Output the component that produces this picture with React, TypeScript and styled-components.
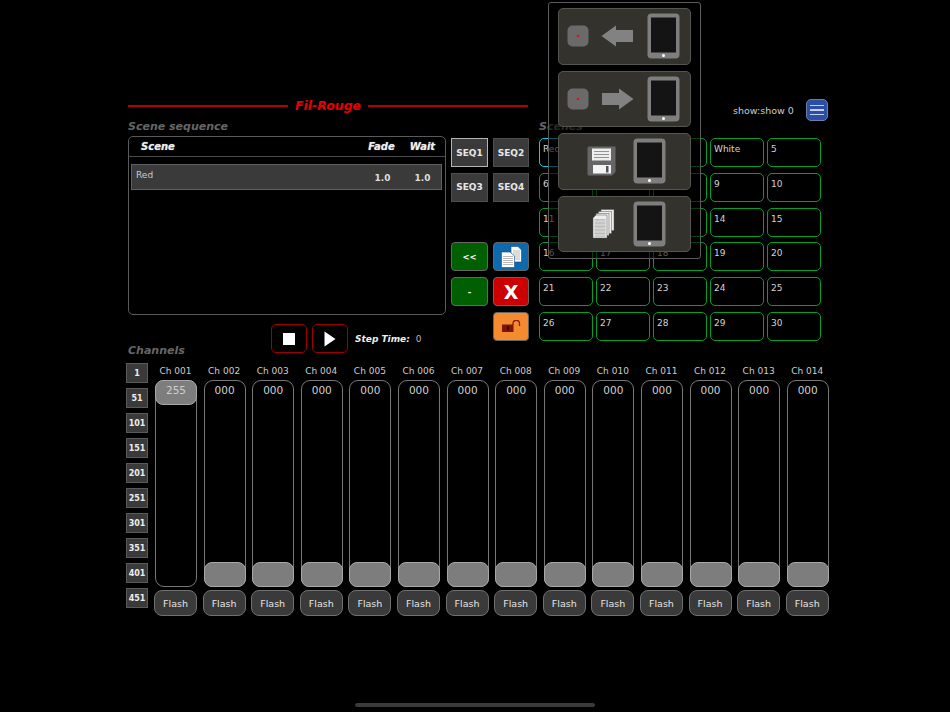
import styled, { createGlobalStyle } from 'styled-components'

const FONT = '"DejaVu Sans", Verdana, sans-serif'

const SCENES = [
  'Red', '2', '3', 'White', '5',
  '6', '7', '8', '9', '10',
  '11', '12', '13', '14', '15',
  '16', '17', '18', '19', '20',
  '21', '22', '23', '24', '25',
  '26', '27', '28', '29', '30',
]
const BANKS = [1, 51, 101, 151, 201, 251, 301, 351, 401, 451]
const CHANNELS = Array(14).fill(null).map((_, idx) => ({
  name: 'Ch ' + String(idx + 1).padStart(3, '0'),
  value: idx === 0 ? 255 : 0,
}))

const GlobalStyle = createGlobalStyle`
  html, body {
    margin: 0;
    background: #000;
  }
`

export default function App() {
  return (
    <Page>
      <GlobalStyle />
      <Header>
        <TitleBar>
          <TitleLine />
          <Title>Fil-Rouge</Title>
          <TitleLine />
        </TitleBar>
        <ShowName>show:show 0</ShowName>
        <MenuButton>
          <span />
          <span />
          <span />
        </MenuButton>
      </Header>

      <TopArea>
        <SequenceColumn>
          <SectionLabel>Scene sequence</SectionLabel>
          <SequencePanel>
            <SequenceHead>
              <HeadScene>Scene</HeadScene>
              <HeadFade>Fade</HeadFade>
              <HeadWait>Wait</HeadWait>
            </SequenceHead>
            <SequenceRow>
              <RowName>Red</RowName>
              <RowFade>1.0</RowFade>
              <RowWait>1.0</RowWait>
            </SequenceRow>
          </SequencePanel>
          <Transport>
            <TransportButton>
              <svg width="12" height="12" viewBox="0 0 12 12"><rect width="12" height="12" fill="#fff" /></svg>
            </TransportButton>
            <TransportButton>
              <svg width="12" height="16" viewBox="0 0 12 16"><path d="M0.5 0.5 L11.5 8 L0.5 15.5 Z" fill="#fff" /></svg>
            </TransportButton>
            <StepTime>Step Time:</StepTime>
            <StepValue>0</StepValue>
          </Transport>
        </SequenceColumn>

        <ActionGrid>
          <SeqButton $active>SEQ1</SeqButton>
          <SeqButton>SEQ2</SeqButton>
          <SeqButton>SEQ3</SeqButton>
          <SeqButton>SEQ4</SeqButton>
          <EmptyRow />
          <ActionButton $color="#005f00">&lt;&lt;</ActionButton>
          <ActionButton $color="#0f69ad"><CopyIcon /></ActionButton>
          <ActionButton $color="#005f00">-</ActionButton>
          <ActionButton $color="#cc0000" $big>X</ActionButton>
          <span />
          <ActionButton $color="#f58a2e"><LockIcon /></ActionButton>
        </ActionGrid>

        <SceneColumn>
          <SectionLabel>Scenes</SectionLabel>
          <SceneGrid>
            {SCENES.map((scene, idx) => (
              <SceneCell key={idx} $active={idx === 0}>{scene}</SceneCell>
            ))}
          </SceneGrid>
        </SceneColumn>
      </TopArea>

      <ChannelsLabel>Channels</ChannelsLabel>
      <ChannelArea>
        <BankColumn>
          {BANKS.map(bank => (
            <BankButton key={bank}>{bank}</BankButton>
          ))}
        </BankColumn>
        <ChannelGrid>
          {CHANNELS.map(ch => (
            <Channel key={ch.name}>
              <ChannelName>{ch.name}</ChannelName>
              <Track $top={ch.value === 255}>
                <Thumb />
                <ChannelValue>{String(ch.value).padStart(3, '0')}</ChannelValue>
              </Track>
              <FlashButton>Flash</FlashButton>
            </Channel>
          ))}
        </ChannelGrid>
      </ChannelArea>

      <Popup>
        <PopupCard>
          <DeviceIcon />
          <ArrowLeft />
          <TabletIcon />
        </PopupCard>
        <PopupCard>
          <DeviceIcon />
          <ArrowRight />
          <TabletIcon />
        </PopupCard>
        <PopupCard $centered>
          <FloppyIcon />
          <TabletIcon />
        </PopupCard>
        <PopupCard $centered>
          <PagesIcon />
          <TabletIcon />
        </PopupCard>
      </Popup>

      <HomeBar />
    </Page>
  )
}

function CopyIcon() {
  return (
    <svg width="21" height="22" viewBox="0 0 21 22">
      <path d="M10 0.500 H17 L20.500 4 V16 H10 Z" fill="#fff" stroke="#0b4f85" strokeWidth="0.600" />
      <path d="M12 5h7M12 7h7M12 9h7M12 11h7M12 13h7" stroke="#9a9a9a" strokeWidth="0.700" />
      <path d="M0.500 6 H9 L13.500 10 V21.500 H0.500 Z" fill="#fff" stroke="#0b4f85" strokeWidth="0.600" />
      <path d="M2 10.500h10M2 12.500h10M2 14.500h10M2 16.500h10M2 18.500h10" stroke="#9a9a9a" strokeWidth="0.700" />
    </svg>
  )
}

function LockIcon() {
  return (
    <svg width="19" height="12" viewBox="0 0 19 12">
      <path d="M11 5 V3.500 A3.200 3.200 0 0 1 17.500 3.500 V6" fill="none" stroke="#8b1a10" strokeWidth="1.300" />
      <rect x="0" y="4.500" width="11.500" height="7.500" fill="#7d1408" />
      <rect x="5" y="6.500" width="1.800" height="3.500" fill="#111" />
    </svg>
  )
}

function DeviceIcon() {
  return (
    <svg width="22" height="22" viewBox="0 0 22 22">
      <rect x="0.500" y="0.500" width="21" height="21" rx="5" fill="#6a6a6a" />
      <circle cx="11" cy="11" r="1.300" fill="#e0101a" />
    </svg>
  )
}

function ArrowLeft() {
  return (
    <svg width="33" height="22" viewBox="0 0 33 22">
      <path d="M0.500 11 L15 0.500 V5 H32 V17 H15 V21.500 Z" fill="#828282" />
    </svg>
  )
}

function ArrowRight() {
  return (
    <svg width="33" height="22" viewBox="0 0 33 22">
      <path d="M32.500 11 L18 0.500 V5 H1 V17 H18 V21.500 Z" fill="#828282" />
    </svg>
  )
}

function TabletIcon() {
  return (
    <svg width="33" height="46" viewBox="0 0 33 46">
      <rect x="0.500" y="0.500" width="32" height="45" rx="4" fill="#7e7e7e" />
      <rect x="4" y="4.500" width="25" height="35" fill="#141414" />
      <circle cx="16.500" cy="42.500" r="1.500" fill="#fff" />
    </svg>
  )
}

function FloppyIcon() {
  return (
    <svg width="29" height="30" viewBox="0 0 29 30">
      <path d="M2 0.500 H28.500 V26 L25 29.500 H2 A1.500 1.500 0 0 1 0.500 28 V2 A1.500 1.500 0 0 1 2 0.500 Z" fill="#666" />
      <rect x="5" y="2.500" width="19" height="12" fill="#eee" />
      <path d="M7 5.500h15M7 8.500h15M7 11.500h15" stroke="#888" strokeWidth="0.900" />
      <rect x="6" y="19" width="18" height="8.500" fill="#f4f4f4" />
      <rect x="19" y="20" width="2.500" height="6.500" fill="#555" />
    </svg>
  )
}

function PagesIcon() {
  const lines = [0, 1, 2, 3, 4, 5, 6, 7, 8, 9, 10, 11, 12]
  return (
    <svg width="29" height="30" viewBox="0 0 29 30">
      <rect x="14" y="0.500" width="13" height="21" fill="#eee" stroke="#555" strokeWidth="0.500" />
      <rect x="11.500" y="2.500" width="13" height="22" fill="#eee" stroke="#555" strokeWidth="0.500" />
      <rect x="9" y="4.500" width="13" height="22" fill="#eee" stroke="#555" strokeWidth="0.500" />
      <path d="M6 9 L9 6 H20 V29 H6 Z" fill="#eee" stroke="#555" strokeWidth="0.500" />
      {lines.map(i => (
        <path key={i} d={`M7.500 ${10.500 + i * 1.400}h11`} stroke="#999" strokeWidth="0.600" />
      ))}
    </svg>
  )
}

const Page = styled.div`
  position: relative;
  box-sizing: border-box;
  width: 950px;
  height: 712px;
  padding: 98px 0 0 126px;
  overflow: hidden;
  background: #000;
  font-family: ${FONT};
  color: #ccc;
`

const Header = styled.div`
  display: flex;
  height: 21px;
  padding-left: 2px;
`

const TitleBar = styled.div`
  display: flex;
  align-items: center;
  gap: 7px;
  width: 400px;
  height: 15px;
`

const TitleLine = styled.div`
  flex: 1;
  height: 2px;
  background: #b00000;
`

const Title = styled.div`
  font-size: 12.500px;
  font-weight: bold;
  font-style: italic;
  color: #e80000;
`

const ShowName = styled.div`
  margin: 6px 0 0 205px;
  width: 73px;
  font-size: 9.500px;
  line-height: 13px;
  color: #ccc;
`

const MenuButton = styled.div`
  box-sizing: border-box;
  display: flex;
  flex-direction: column;
  justify-content: center;
  gap: 3px;
  width: 22px;
  height: 22px;
  margin-top: 1px;
  padding: 0 3px;
  background: #2b4fa5;
  border: 1.500px solid #6d7fa8;
  border-radius: 5px;

  span {
    height: 1.500px;
    background: #c5d0ee;
  }
`

const TopArea = styled.div`
  display: flex;
  padding-left: 2px;
`

const SequenceColumn = styled.div`
  width: 318px;
`

const SectionLabel = styled.div`
  height: 17px;
  font-size: 11px;
  line-height: 16px;
  font-weight: bold;
  font-style: italic;
  color: #666;
`

const SequencePanel = styled.div`
  box-sizing: border-box;
  height: 179px;
  border: 1.500px solid #5a5a5a;
  border-radius: 5px;
`

const SequenceHead = styled.div`
  display: grid;
  grid-template-columns: 1fr 41px 41px;
  align-items: center;
  height: 19px;
  padding-right: 2px;
  border-bottom: 1px solid #4a4a4a;
  font-size: 10px;
  font-weight: bold;
  font-style: italic;
  color: #eee;
  text-shadow: 0 0 1px #999;
`

const HeadScene = styled.span`
  padding-left: 12px;
`

const HeadFade = styled.span`
  text-align: center;
`

const HeadWait = styled.span`
  text-align: center;
`

const SequenceRow = styled.div`
  box-sizing: border-box;
  display: grid;
  grid-template-columns: 1fr 43px 37px;
  height: 26px;
  margin: 7px 3px 0 2px;
  padding: 0 0 0 4px;
  background: #3a3a3a;
  border: 1px solid #606060;
`

const RowName = styled.span`
  font-size: 9px;
  line-height: 21px;
  color: #ccc;
`

const RowFade = styled.span`
  font-size: 9px;
  font-weight: bold;
  line-height: 27px;
  text-align: center;
  color: #ddd;
`

const RowWait = styled(RowFade)``

const Transport = styled.div`
  display: flex;
  align-items: center;
  height: 29px;
  margin-top: 9px;
  padding-left: 143px;
`

const TransportButton = styled.div`
  box-sizing: border-box;
  display: flex;
  align-items: center;
  justify-content: center;
  width: 36px;
  height: 29px;
  margin-right: 5px;
  background: #000;
  border: 1.500px solid #a00000;
  border-radius: 5px;
`

const StepTime = styled.span`
  margin-left: 2px;
  font-size: 9px;
  font-weight: bold;
  font-style: italic;
  color: #eee;
`

const StepValue = styled.span`
  margin-left: 6px;
  font-size: 9px;
  color: #bbb;
`

const ActionGrid = styled.div`
  display: grid;
  grid-template-columns: 37px 36px;
  grid-template-rows: repeat(6, 29px);
  column-gap: 5px;
  row-gap: 5.800px;
  margin: 19px 0 0 5px;
`

const EmptyRow = styled.span`
  grid-column: 1 / -1;
`

const SeqButton = styled.div<{ $active?: boolean }>`
  box-sizing: border-box;
  display: flex;
  align-items: center;
  justify-content: center;
  background: #3a3a3a;
  border: 1.500px solid ${p => (p.$active ? '#b4b4b4' : '#4e4e4e')};
  font-size: 9px;
  font-weight: bold;
  color: #e8e8e8;
`

const ActionButton = styled.div<{ $color: string; $big?: boolean }>`
  box-sizing: border-box;
  display: flex;
  align-items: center;
  justify-content: center;
  background: ${p => p.$color};
  border: 1px solid #666;
  border-radius: 4px;
  font-size: ${p => (p.$big ? '19px' : '8.500px')};
  font-weight: bold;
  color: #fff;
`

const SceneColumn = styled.div`
  margin-left: 10px;
`

const SceneGrid = styled.div`
  display: grid;
  grid-template-columns: repeat(5, 54px);
  grid-template-rows: repeat(6, 29px);
  column-gap: 3px;
  row-gap: 5.800px;
  padding-top: 2px;
`

const SceneCell = styled.div<{ $active?: boolean }>`
  box-sizing: border-box;
  padding: 4px 0 0 3px;
  border: 1.500px solid ${p => (p.$active ? '#00d2e0' : '#00a030')};
  border-radius: 5px;
  font-size: 9px;
  line-height: 13px;
  color: #d4d4d4;
`

const ChannelsLabel = styled(SectionLabel)`
  height: 15px;
  margin: -10px 0 0 2px;
`

const ChannelArea = styled.div`
  display: flex;
  margin-top: 5px;
`

const BankColumn = styled.div`
  display: flex;
  flex-direction: column;
  gap: 5px;
  width: 22px;
`

const BankButton = styled.div`
  box-sizing: border-box;
  display: flex;
  align-items: center;
  justify-content: center;
  height: 20px;
  background: #3a3a3a;
  border: 1.500px solid #5a5a5a;
  font-size: 8px;
  font-weight: bold;
  color: #eee;
`

const ChannelGrid = styled.div`
  display: grid;
  grid-template-columns: repeat(14, 43px);
  column-gap: 5.600px;
  margin-left: 6px;
`

const Channel = styled.div`
  display: flex;
  flex-direction: column;
`

const ChannelName = styled.div`
  height: 17px;
  font-size: 9px;
  line-height: 16px;
  text-align: center;
  color: #ccc;
`

const Track = styled.div<{ $top: boolean }>`
  position: relative;
  box-sizing: border-box;
  display: flex;
  flex-direction: column;
  justify-content: ${p => (p.$top ? 'flex-start' : 'flex-end')};
  height: 207px;
  margin-left: 1px;
  border: 1.500px solid #777;
  border-radius: 9px;
`

const Thumb = styled.div`
  box-sizing: border-box;
  height: 25px;
  margin: ${'-1px'};
  background: #7d7d7d;
  border: 1.500px solid #a8a8a8;
  border-radius: 8px;
`

const ChannelValue = styled.div`
  position: absolute;
  top: 2px;
  left: 0;
  right: 0;
  font-size: 10.500px;
  line-height: 14px;
  text-align: center;
  color: #d0d0d0;
`

const FlashButton = styled.div`
  box-sizing: border-box;
  display: flex;
  align-items: center;
  justify-content: center;
  height: 26px;
  margin-top: 3px;
  background: #3a3a3a;
  border: 1.500px solid #707070;
  border-radius: 8px;
  font-size: 9.500px;
  color: #e4e4e4;
`

const Popup = styled.div`
  position: absolute;
  top: 2px;
  left: 548px;
  box-sizing: border-box;
  display: flex;
  flex-direction: column;
  gap: 6px;
  width: 153px;
  height: 257px;
  padding: 5px 9px 6px;
  background: rgba(0, 0, 0, 0.6);
  border: 1px solid #5c5c5c;
  border-radius: 3px;
`

const PopupCard = styled.div<{ $centered?: boolean }>`
  box-sizing: border-box;
  flex: 1;
  display: flex;
  align-items: center;
  justify-content: ${p => (p.$centered ? 'center' : 'flex-start')};
  gap: ${p => (p.$centered ? '17px' : '12.500px')};
  padding-left: ${p => (p.$centered ? '3px' : '7.500px')};
  background: #33322c;
  border: 1.500px solid #565650;
  border-radius: 5px;
`

const HomeBar = styled.div`
  position: absolute;
  left: 355px;
  bottom: 5px;
  width: 240px;
  height: 4px;
  border-radius: 2px;
  background: #3a3a3a;
`
